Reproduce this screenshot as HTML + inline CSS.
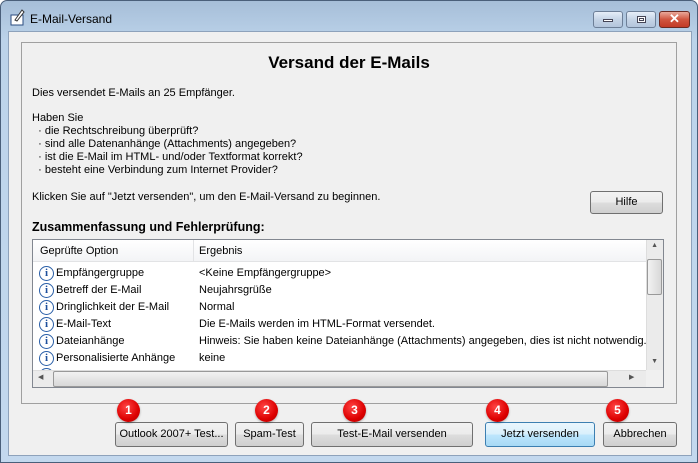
<!DOCTYPE html>
<html><head><meta charset="utf-8"><style>
*{box-sizing:border-box}
body{margin:0;width:698px;height:463px;overflow:hidden;font-family:"Liberation Sans",sans-serif;font-size:11px;color:#000;background:#fff}
.win{position:absolute;left:0;top:0;width:698px;height:463px;border-radius:7px 7px 0 0;background:linear-gradient(#a6bed8,#bcd3ea 40px,#c3d8ee);border:1px solid #4a5f7a}
.client{position:absolute;left:7px;top:30px;width:684px;height:425px;background:#f0f0f0;border:1px solid #8ea2bb}
.title{position:absolute;left:29px;top:11px;font-size:12px;color:#000}
.tb{position:absolute;top:10px;height:17px;border:1px solid #6d7f97;border-radius:3px;background:linear-gradient(#e6eef8,#c5d4e6 50%,#b3c5dc)}
.panel{position:absolute;left:21px;top:42px;width:656px;height:362px;border:1px solid #a0a0a0;background:#f0f0f0}
.t{position:absolute;white-space:nowrap}
.btn{position:absolute;top:422px;height:25px;border:1px solid #707070;border-radius:3px;background:linear-gradient(#f2f2f2,#ebebeb 50%,#dddddd 51%,#cfcfcf);text-align:center;line-height:23px;font-size:11px;white-space:nowrap}
.badge{position:absolute;top:399px;width:23px;height:23px;border-radius:50%;background:radial-gradient(circle at 40% 35%,#f44,#d00 60%,#a00);color:#fff;font-weight:bold;font-size:12px;text-align:center;line-height:23px;box-shadow:0 1px 2px rgba(0,0,0,.3)}
.list{position:absolute;left:32px;top:239px;width:632px;height:149px;border:1px solid #828790;background:#fff;overflow:hidden}
.row{position:absolute;left:0;height:17px;line-height:17px;white-space:nowrap}
.ic{position:absolute;left:6px;top:1px;width:15px;height:15px;border:1.5px solid #2a5fa8;border-radius:50%;background:#fff;color:#1e4f9c;font-weight:bold;font-size:11px;line-height:12px;text-align:center;font-family:"Liberation Serif",serif}
</style></head><body>
<div class="win">
<svg style="position:absolute;left:9px;top:8px" width="16" height="17"><rect x="1" y="6" width="12" height="10" fill="#fff" stroke="#2b4c80"/><path d="M5 11 L12 1 L14 3 L7 12 Z" fill="#fff" stroke="#333"/></svg>
<div class="title">E-Mail-Versand</div>
<div class="tb" style="left:592px;width:30px"><div style="position:absolute;left:9px;top:7px;width:10px;height:3px;background:#fff;border:1px solid #445"></div></div>
<div class="tb" style="left:625px;width:30px"><div style="position:absolute;left:10px;top:4px;width:9px;height:7px;border:1px solid #445;background:#fff"><div style="margin:1px;height:3px;border:1px solid #445"></div></div></div>
<div class="tb" style="left:658px;width:31px;border-color:#6b2a22;background:linear-gradient(#e9a99a,#d0553f 50%,#c23a26);color:#fff;font-weight:bold;text-align:center;line-height:14px;font-size:13px">✕</div>
<div class="client"></div>
</div>
<div class="panel"></div>
<div class="t" style="left:0;width:698px;text-align:center;top:53px;font-size:17px;font-weight:bold">Versand der E-Mails</div>
<div class="t" style="left:32px;top:87px">Dies versendet E-Mails an 25 Empfänger.</div>
<div class="t" style="left:32px;top:112px;line-height:13px">Haben Sie<br>&nbsp;&nbsp;· die Rechtschreibung überprüft?<br>&nbsp;&nbsp;· sind alle Datenanhänge (Attachments) angegeben?<br>&nbsp;&nbsp;· ist die E-Mail im HTML- und/oder Textformat korrekt?<br>&nbsp;&nbsp;· besteht eine Verbindung zum Internet Provider?</div>
<div class="t" style="left:32px;top:191px">Klicken Sie auf "Jetzt versenden", um den E-Mail-Versand zu beginnen.</div>
<div class="btn" style="left:590px;top:191px;width:73px;height:23px;line-height:21px">Hilfe</div>
<div class="t" style="left:32px;top:220px;font-size:12.5px;font-weight:bold">Zusammenfassung und Fehlerprüfung:</div>
<div class="list">
<div style="position:absolute;left:0;top:0;width:614px;height:22px;background:linear-gradient(#fff,#f3f4f6);border-bottom:1px solid #e2e3e5"></div>
<div style="position:absolute;left:160px;top:0;width:1px;height:22px;background:#e2e3e5"></div>
<div class="t" style="left:7px;top:5px">Geprüfte Option</div>
<div class="t" style="left:166px;top:5px">Ergebnis</div>
<div class="row" style="top:25px"><span class="ic">i</span><span class="t" style="left:23px">Empfängergruppe</span><span class="t" style="left:166px">&lt;Keine Empfängergruppe&gt;</span></div>
<div class="row" style="top:42px"><span class="ic">i</span><span class="t" style="left:23px">Betreff der E-Mail</span><span class="t" style="left:166px">Neujahrsgrüße</span></div>
<div class="row" style="top:59px"><span class="ic">i</span><span class="t" style="left:23px">Dringlichkeit der E-Mail</span><span class="t" style="left:166px">Normal</span></div>
<div class="row" style="top:76px"><span class="ic">i</span><span class="t" style="left:23px">E-Mail-Text</span><span class="t" style="left:166px">Die E-Mails werden im HTML-Format versendet.</span></div>
<div class="row" style="top:93px"><span class="ic">i</span><span class="t" style="left:23px">Dateianhänge</span><span class="t" style="left:166px">Hinweis: Sie haben keine Dateianhänge (Attachments) angegeben, dies ist nicht notwendig.</span></div>
<div class="row" style="top:110px"><span class="ic">i</span><span class="t" style="left:23px">Personalisierte Anhänge</span><span class="t" style="left:166px">keine</span></div>
<div class="row" style="top:127px"><span class="ic">i</span></div>
<div style="position:absolute;right:0;top:0;width:17px;height:130px;background:#ebebeb;border-left:1px solid #ddd"></div>
<div style="position:absolute;right:1px;top:19px;width:15px;height:36px;border:1px solid #999;border-radius:2px;background:linear-gradient(90deg,#f2f2f2,#d8d8d8)"></div>
<div class="t" style="right:5px;top:2px;font-size:7px;color:#555">▲</div>
<div class="t" style="right:5px;top:118px;font-size:7px;color:#555">▼</div>
<div style="position:absolute;left:0;top:130px;width:631px;height:18px;background:#ebebeb;border-top:1px solid #ddd"></div>
<div style="position:absolute;left:20px;top:131px;width:555px;height:16px;border:1px solid #999;border-radius:2px;background:linear-gradient(#f2f2f2,#d8d8d8)"></div>
<div class="t" style="left:5px;top:133px;font-size:7px;color:#555">◀</div>
<div class="t" style="left:596px;top:133px;font-size:7px;color:#555">▶</div>
<div style="position:absolute;right:0;top:130px;width:17px;height:18px;background:#f0f0f0"></div>
</div>
<div class="btn" style="left:115px;width:113px">Outlook 2007+ Test...</div>
<div class="btn" style="left:235px;width:69px">Spam-Test</div>
<div class="btn" style="left:311px;width:162px">Test-E-Mail versenden</div>
<div class="btn" style="left:485px;width:110px;border-color:#3c7fb1;background:linear-gradient(#eaf6fd,#d9f0fc 50%,#bee6fd 51%,#a7d9f5)">Jetzt versenden</div>
<div class="btn" style="left:603px;width:74px">Abbrechen</div>
<div class="badge" style="left:117px">1</div>
<div class="badge" style="left:255px">2</div>
<div class="badge" style="left:343px">3</div>
<div class="badge" style="left:486px">4</div>
<div class="badge" style="left:606px">5</div>
</body></html>
